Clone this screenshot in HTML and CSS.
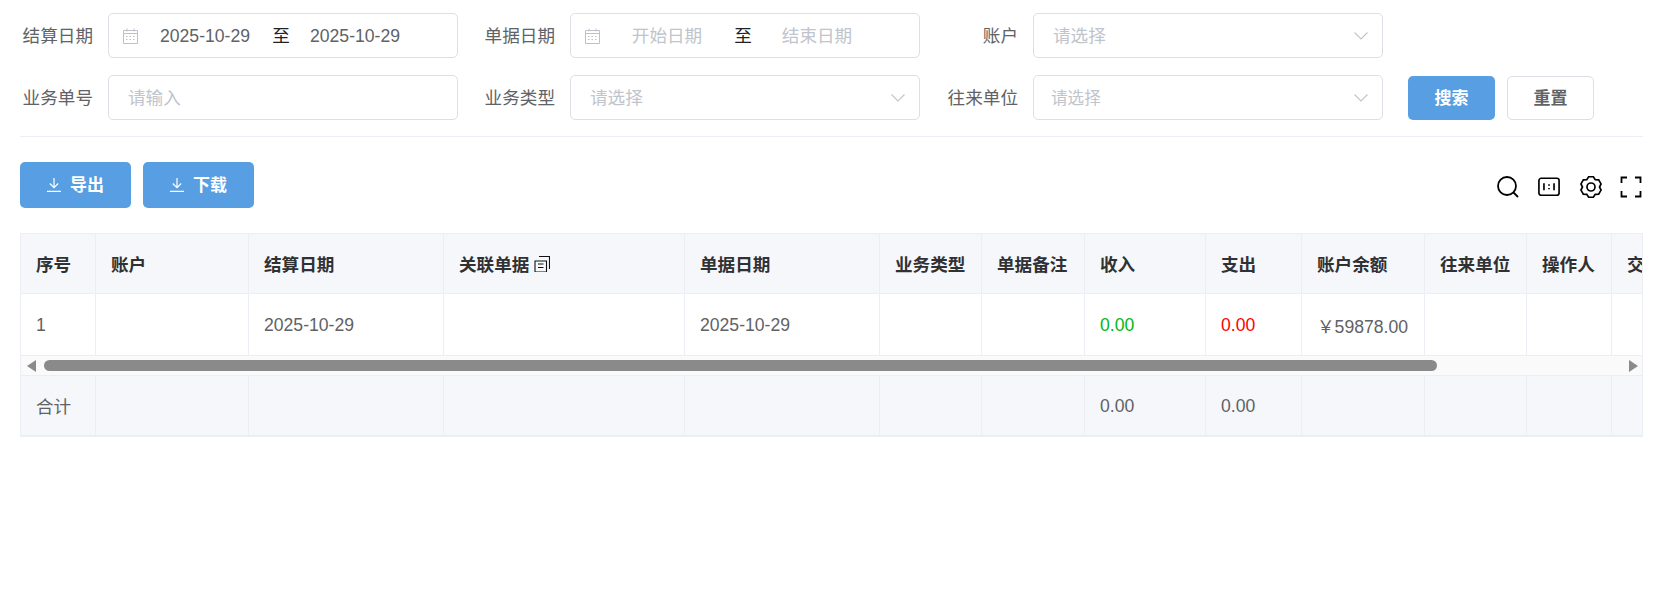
FILE: index.html
```html
<!DOCTYPE html>
<html lang="zh-CN">
<head>
    <meta charset="UTF-8">
    <meta name="viewport" content="width=device-width, initial-scale=1.0">
    <title>账户流水</title>
    <link rel="stylesheet" href="styles.css">
</head>
<body>
    <div class="page">
        <form class="search-form">
            <label class="form-label">结算日期</label>
            <div class="control date-range">
                <svg class="calendar-icon" viewBox="0 0 17 16"><path d="M1.5 2.5h14v13h-14zM1.5 5.5h14M5 .5v3M12 .5v3"/><path class="dots" d="M4 8.5h2M7.500 8.500h2M11 8.500h2M4 11.500h2M7.500 11.500h2M11 11.500h2"/></svg>
                <span class="date-field">2025-10-29</span>
                <span class="date-sep">至</span>
                <span class="date-field">2025-10-29</span>
            </div>
            <label class="form-label">单据日期</label>
            <div class="control date-range">
                <svg class="calendar-icon" viewBox="0 0 17 16"><path d="M1.5 2.5h14v13h-14zM1.5 5.5h14M5 .5v3M12 .5v3"/><path class="dots" d="M4 8.5h2M7.500 8.500h2M11 8.500h2M4 11.500h2M7.500 11.500h2M11 11.500h2"/></svg>
                <span class="date-field placeholder">开始日期</span>
                <span class="date-sep">至</span>
                <span class="date-field placeholder">结束日期</span>
            </div>
            <label class="form-label">账户</label>
            <div class="control select">
                <span class="placeholder">请选择</span>
                <svg class="arrow-icon" viewBox="0 0 14 8"><path d="M.5.5 7 7l6.500-6.500"/></svg>
            </div>
            <div></div>

            <label class="form-label">业务单号</label>
            <div class="control">
                <span class="placeholder">请输入</span>
            </div>
            <label class="form-label">业务类型</label>
            <div class="control select">
                <span class="placeholder">请选择</span>
                <svg class="arrow-icon" viewBox="0 0 14 8"><path d="M.5.5 7 7l6.500-6.500"/></svg>
            </div>
            <label class="form-label">往来单位</label>
            <div class="control select small">
                <span class="placeholder">请选择</span>
                <svg class="arrow-icon" viewBox="0 0 14 8"><path d="M.5.5 7 7l6.500-6.500"/></svg>
            </div>
            <div class="form-actions">
                <button type="button" class="btn btn-primary btn-search"><span class="btn-text">搜索</span></button>
                <button type="button" class="btn btn-default"><span class="btn-text">重置</span></button>
            </div>
        </form>

        <div class="toolbar">
            <div class="toolbar-left">
                <button type="button" class="btn btn-primary btn-tool">
                    <svg class="download-icon" viewBox="0 0 14 14"><path d="M7 0v9.500M2.800 5.500 7 9.700l4.200-4.200M0 13.300h14"/></svg>
                    <span class="btn-text">导出</span>
                </button>
                <button type="button" class="btn btn-primary btn-tool">
                    <svg class="download-icon" viewBox="0 0 14 14"><path d="M7 0v9.500M2.800 5.500 7 9.700l4.200-4.200M0 13.300h14"/></svg>
                    <span class="btn-text">下载</span>
                </button>
            </div>
            <div class="toolbar-right">
                <svg class="tool-icon" viewBox="0 0 22 22"><circle cx="10" cy="10" r="9"/><path d="m16.500 16.500 4.500 4.500"/></svg>
                <svg class="tool-icon" viewBox="0 0 24 22"><rect x="1" y="1.500" width="22" height="18.500" rx="2.500"/><path d="M6.500 7v7.500M17.500 7v7.500M12 8v1.500M12 12v1.500"/></svg>
                <svg class="tool-icon gear" viewBox="0 0 24 24"><path d="M9.640 1.770h4.720l1.890 2.870 3.430.2 2.360 4.090L20.500 12l1.540 3.070-2.360 4.090-3.430.2-1.890 2.870H9.640l-1.890-2.870-3.430-.2-2.360-4.090L3.500 12 1.960 8.930l2.360-4.090 3.430-.2z"/><circle cx="12" cy="12" r="4"/></svg>
                <svg class="tool-icon" viewBox="0 0 22 22"><path d="M7 1.500H1.500V7M15 1.500h5.500V7M1.500 15v5.500H7M20.500 15v5.500H15"/></svg>
            </div>
        </div>

        <div class="table-wrap">
            <table class="data-table">
                <colgroup>
                    <col width="75"><col width="153"><col width="195"><col width="241"><col width="195"><col width="102"><col width="103"><col width="121"><col width="96"><col width="123"><col width="102"><col width="85"><col width="120">
                </colgroup>
                <thead>
                    <tr>
                        <th>序号</th>
                        <th>账户</th>
                        <th>结算日期</th>
                        <th>
                            <span class="th-with-icon">关联单据
                                <svg class="copy-icon" viewBox="0 0 16 16"><path d="M5 .5h10.500v12.500M1 5h11.500v11H1zM4 8h5.500M4 11.500h5.500"/></svg>
                            </span>
                        </th>
                        <th>单据日期</th>
                        <th>业务类型</th>
                        <th>单据备注</th>
                        <th>收入</th>
                        <th>支出</th>
                        <th>账户余额</th>
                        <th>往来单位</th>
                        <th>操作人</th>
                        <th>交</th>
                    </tr>
                </thead>
                <tbody>
                    <tr>
                        <td>1</td>
                        <td></td>
                        <td>2025-10-29</td>
                        <td></td>
                        <td>2025-10-29</td>
                        <td></td>
                        <td></td>
                        <td class="income">0.00</td>
                        <td class="expense">0.00</td>
                        <td>￥59878.00</td>
                        <td></td>
                        <td></td>
                        <td></td>
                    </tr>
                </tbody>
            </table>

            <div class="scroll-bar">
                <span class="scroll-arrow left"></span>
                <span class="scroll-thumb"></span>
                <span class="scroll-arrow right"></span>
            </div>

            <table class="data-table total-table">
                <colgroup>
                    <col width="75"><col width="153"><col width="195"><col width="241"><col width="195"><col width="102"><col width="103"><col width="121"><col width="96"><col width="123"><col width="102"><col width="85"><col width="120">
                </colgroup>
                <tbody>
                    <tr>
                        <td class="total-label">合计</td>
                        <td></td>
                        <td></td>
                        <td></td>
                        <td></td>
                        <td></td>
                        <td></td>
                        <td>0.00</td>
                        <td>0.00</td>
                        <td></td>
                        <td></td>
                        <td></td>
                        <td></td>
                    </tr>
                </tbody>
            </table>
        </div>
    </div>
</body>
</html>
```

FILE: styles.css
```css
:root {
    --primary-color: #589ee3;
    --border-color: #dcdfe6;
    --line-color: #ebeef5;
    --head-color: #f5f7fb;
    --text-color: #606266;
    --placeholder-color: #c0c4cc;
    --radius: 5px;
}

* {
    box-sizing: border-box;
    margin: 0;
    padding: 0;
    font-family: "Liberation Sans", "Noto Sans CJK SC", sans-serif;
}

body {
    background-color: #fff;
    color: var(--text-color);
    font-size: 17.6px;
}

.page {
    padding: 13px 15px 0 20px;
    overflow: hidden;
}

/* 搜索表单 */
.search-form {
    display: grid;
    grid-template-columns: 88px 350px 112px 350px 113px 350px 1fr;
    grid-auto-rows: 45px;
    row-gap: 17px;
    padding-bottom: 16px;
    border-bottom: 1px solid var(--line-color);
    margin-bottom: 25px;
}

.form-label {
    align-self: center;
    justify-self: end;
    padding: 0 15px 2px 0;
    white-space: nowrap;
}

.control {
    display: flex;
    align-items: center;
    padding: 0 14px 0 19px;
    border: 1px solid var(--border-color);
    border-radius: var(--radius);
    background-color: #fff;
}

.placeholder {
    padding-bottom: 2px;
    color: var(--placeholder-color);
}

.select {
    justify-content: space-between;
}

.select.small {
    padding-left: 17px;
}

.select.small .placeholder {
    font-size: 16.6px;
}

.arrow-icon {
    width: 14px;
    height: 8px;
    fill: none;
    stroke: var(--placeholder-color);
    stroke-width: 1.100;
}

.date-range {
    padding-left: 13px;
}

.calendar-icon {
    flex: none;
    width: 17px;
    height: 16px;
    margin-right: 8px;
    fill: none;
    stroke: #bcc1cc;
    stroke-width: 1;
}

.calendar-icon .dots {
    stroke-dasharray: 1.500 .500;
}

.date-field {
    flex: none;
    width: 116px;
    padding-top: 1px;
    text-align: center;
    white-space: nowrap;
}

.date-field.placeholder {
    padding: 0 0 2px;
}

.date-sep {
    flex: none;
    width: 34px;
    padding: 0 0 2px 2px;
    text-align: center;
    color: #222;
}

.form-actions {
    display: flex;
    gap: 12px;
    padding: 1px 0 0 25px;
}

/* 按钮 */
.btn {
    display: flex;
    align-items: center;
    justify-content: center;
    border-radius: var(--radius);
    font-size: 17px;
    font-weight: bold;
    cursor: pointer;
}

.btn-text {
    padding-bottom: 3px;
}

.btn-primary {
    border: none;
    background-color: var(--primary-color);
    color: #fff;
}

.btn-default {
    width: 87px;
    height: 44px;
    border: 1px solid var(--border-color);
    background-color: #fff;
    color: var(--text-color);
}

.btn-search {
    width: 87px;
    height: 44px;
}

.btn-tool {
    width: 111px;
    height: 46px;
    gap: 9px;
}

.download-icon {
    width: 14px;
    height: 14px;
    fill: none;
    stroke: #fff;
    stroke-width: 1.200;
}

/* 工具栏 */
.toolbar {
    display: flex;
    justify-content: space-between;
    align-items: center;
    height: 46px;
    margin-bottom: 25px;
}

.toolbar-left {
    display: flex;
    gap: 12px;
}

.toolbar-right {
    display: flex;
    align-items: center;
    gap: 19px;
    margin-top: 4px;
    padding-right: 1px;
}

.tool-icon {
    width: 22px;
    height: 22px;
    fill: none;
    stroke: #000;
    stroke-width: 1.800;
}

.tool-icon.gear {
    width: 24px;
    height: 24px;
    margin-right: -2px;
    stroke-width: 1.700;
}

/* 表格 */
.table-wrap {
    border: 1px solid var(--line-color);
    border-bottom-width: 2px;
    overflow: hidden;
}

.data-table {
    width: 1711px;
    table-layout: fixed;
    border-collapse: separate;
    border-spacing: 0;
}

.data-table th,
.data-table td {
    height: 62px;
    padding: 2px 15px 0;
    border-right: 1px solid var(--line-color);
    border-bottom: 1px solid var(--line-color);
    text-align: left;
    white-space: nowrap;
    overflow: hidden;
}

.data-table th {
    height: 60px;
    padding-top: 0;
    background-color: var(--head-color);
    color: #303133;
    font-weight: bold;
}

.th-with-icon {
    display: flex;
    align-items: center;
    gap: 5px;
}

.copy-icon {
    width: 16px;
    height: 16px;
    fill: none;
    stroke: #111;
    stroke-width: 1.100;
}

.income {
    color: #00b812;
}

.expense {
    color: #ff0000;
}

.scroll-bar {
    display: flex;
    align-items: center;
    height: 20px;
    padding: 0 4px 0 6px;
    border-bottom: 1px solid var(--line-color);
    background-color: #fafafa;
}

.scroll-arrow {
    flex: none;
    width: 0;
    height: 0;
    border-top: 6px solid transparent;
    border-bottom: 6px solid transparent;
}

.scroll-arrow.left {
    border-right: 9px solid #8a8a8a;
}

.scroll-arrow.right {
    margin-left: auto;
    border-left: 9px solid #8a8a8a;
}

.scroll-thumb {
    width: 1393px;
    height: 11px;
    margin-left: 8px;
    border-radius: 6px;
    background-color: #8a8a8a;
}

.total-table td {
    height: 59px;
    border-bottom: none;
    background-color: var(--head-color);
}

.total-table .total-label {
    padding-top: 0;
}
```
